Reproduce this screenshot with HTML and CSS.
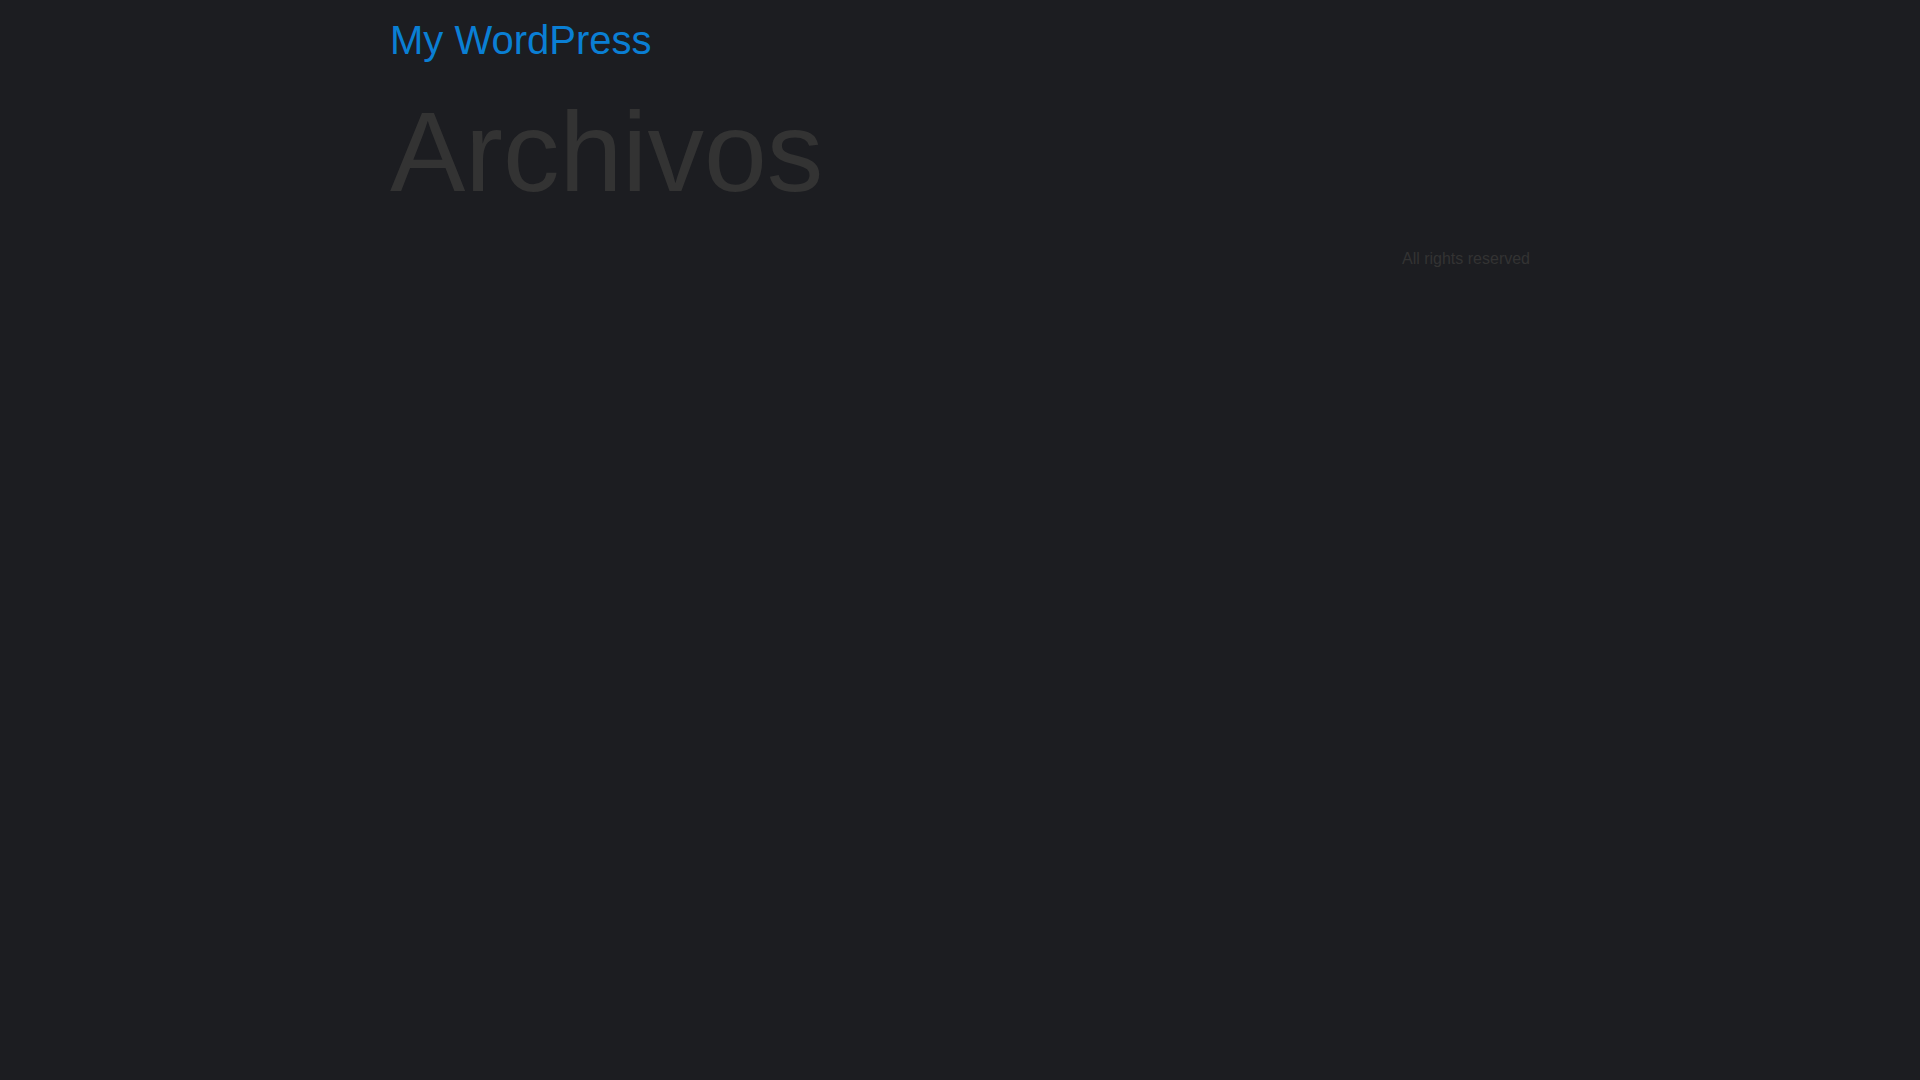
FILE: index.html
```html
<!DOCTYPE html>
<html lang="es">
<head>
<meta charset="utf-8">
<title>Archivos – My WordPress</title>
<link rel="stylesheet" href="styles.css">
</head>
<body>
<div class="site">
  <header class="site-header">
    <p class="site-title"><a href="#">My WordPress</a></p>
  </header>
  <main class="site-main">
    <h1 class="page-title">Archivos</h1>
  </main>
  <footer class="site-footer">
    <p class="copyright">All rights reserved</p>
  </footer>
</div>
</body>
</html>
```
FILE: styles.css
```css
html, body {
  margin: 0;
  padding: 0;
  background: #1c1d21;
}
body {
  font-family: "Liberation Sans", Arial, sans-serif;
  color: #333333;
}
.site {
  width: 1140px;
  margin: 0 auto;
}
.site-header {
  padding-top: 16px;
}
.site-title {
  margin: 0;
  font-size: 40px;
  line-height: 48px;
}
.site-title a {
  color: #0a7fd4;
  text-decoration: none;
}
.page-title {
  margin: 21px 0 0;
  font-size: 113px;
  line-height: 134px;
  font-weight: 400;
  color: #333333;
}
.site-footer {
  margin-top: 28px;
  text-align: right;
}
.copyright {
  margin: 0;
  font-size: 16px;
  line-height: 24px;
  color: #333333;
}
```
